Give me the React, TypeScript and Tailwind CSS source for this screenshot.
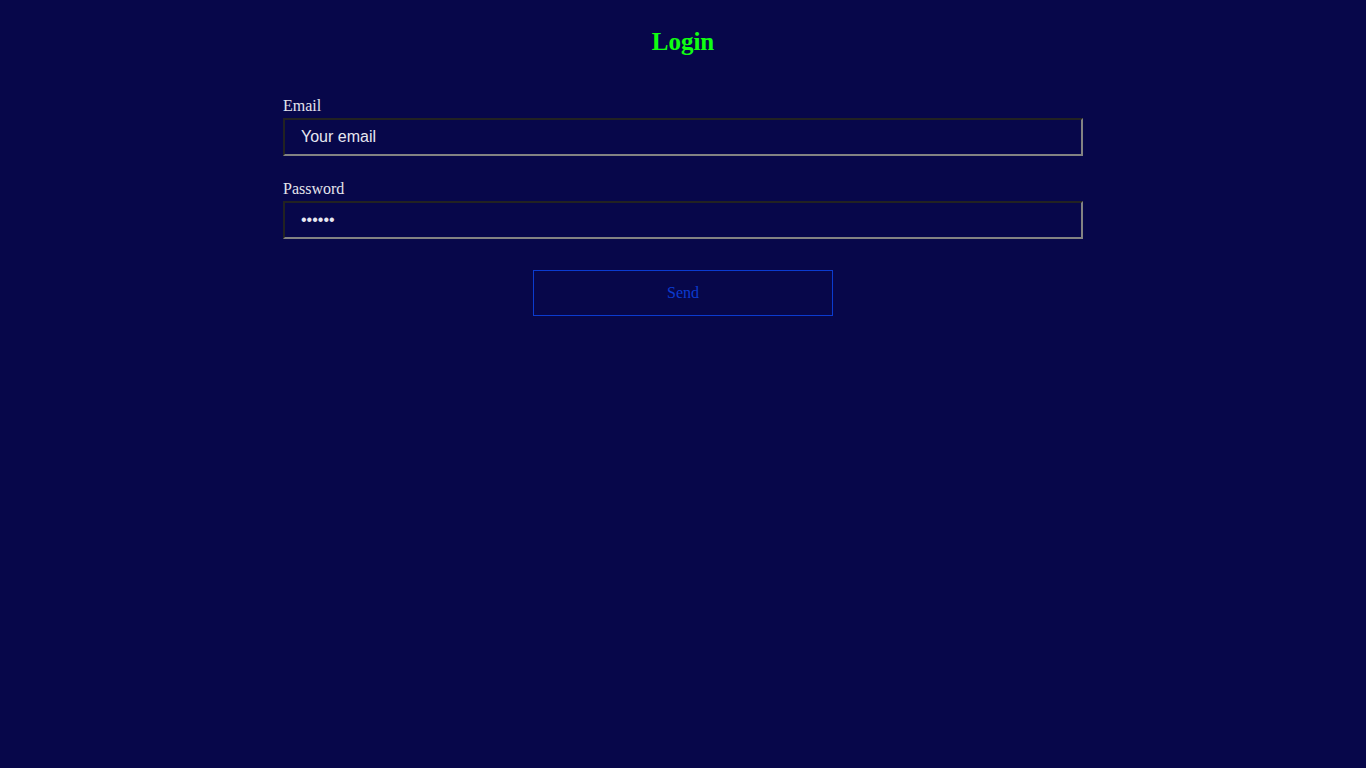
export default function App() {
  return (
    <div className="min-h-screen w-full bg-[#07074a] font-['Liberation_Serif',serif]">
      <h1 className="pt-[27px] text-center text-[25px] font-bold leading-[30px] text-[#11ff11]">
        Login
      </h1>

      <form className="mx-auto mt-[39px] flex w-[800px] flex-col">
        {/* Email */}
        <label className="text-base leading-[19px] text-[#e4e4ec]">Email</label>
        <input
          type="text"
          defaultValue="Your email"
          className="mt-[3px] h-[38px] w-full border-2 border-t-[#222222] border-l-[#222222] border-b-[#828282] border-r-[#828282] bg-[#07074a] px-4 font-['Liberation_Sans',sans-serif] text-base text-[#e6e6f0] outline-none"
        />

        {/* Password */}
        <label className="mt-[23px] text-base leading-[19px] text-[#e4e4ec]">Password</label>
        <input
          type="password"
          defaultValue="123456"
          className="mt-[3px] h-[38px] w-full border-2 border-t-[#222222] border-l-[#222222] border-b-[#828282] border-r-[#828282] bg-[#07074a] px-4 font-['Liberation_Sans',sans-serif] text-base text-[#e6e6f0] outline-none"
        />

        <button
          type="button"
          className="mx-auto mt-[31px] h-[46px] w-[300px] border border-[#0b3bcf] bg-transparent text-base text-[#0b3bcf]"
        >
          Send
        </button>
      </form>
    </div>
  );
}
